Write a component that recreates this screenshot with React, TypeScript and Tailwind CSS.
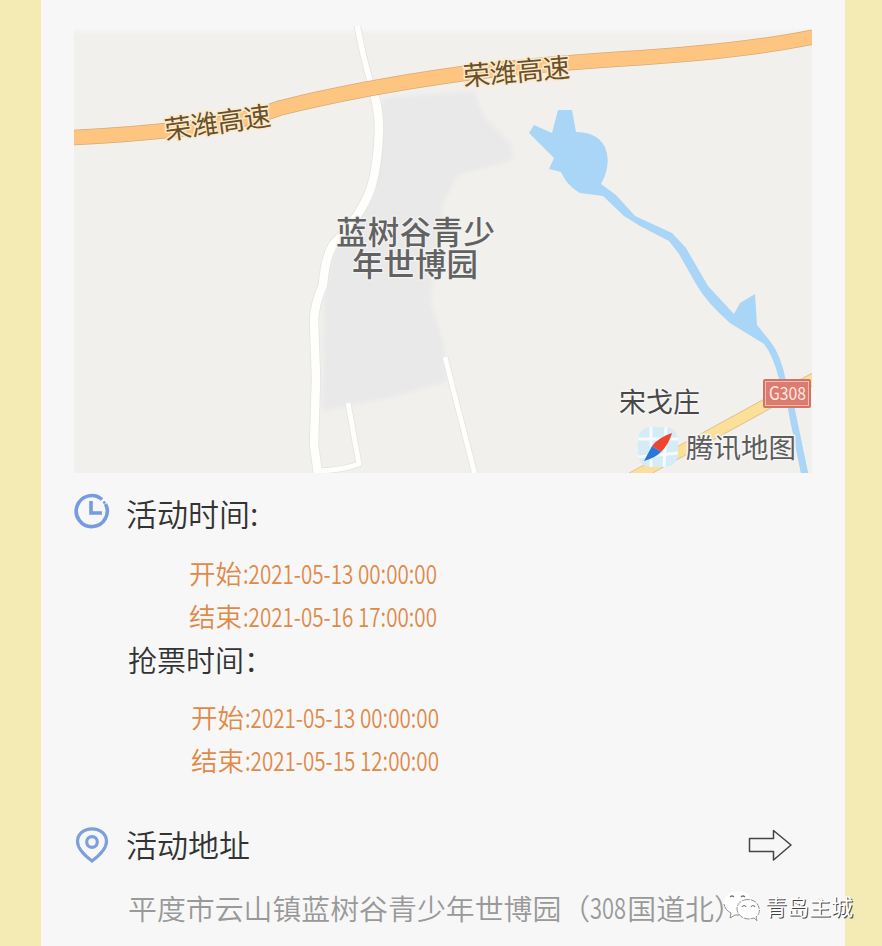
const FONT = "font-['Noto_Sans_CJK_SC',sans-serif]";

function VenueMap() {
  return (
    <svg className="block h-[447px] w-[738px]" viewBox="74 26 738 447">
      <defs>
        <filter id="soft" x="-10%" y="-10%" width="120%" height="120%">
          <feGaussianBlur stdDeviation="2" />
        </filter>
        <linearGradient id="fade" x1="0" y1="0" x2="0" y2="1">
          <stop offset="0" stopColor="#f8f8fa" />
          <stop offset="1" stopColor="#f8f8fa" stopOpacity="0" />
        </linearGradient>
        <clipPath id="logo">
          <rect x="638" y="427" width="40" height="40" rx="13" />
        </clipPath>
      </defs>
      <rect x="74" y="26" width="738" height="447" fill="#f1f0ed" />
      <rect x="74" y="26" width="738" height="9" fill="url(#fade)" />

      {/* Venue grounds */}
      <path
        d="M382 98L474 91L484 117L512 145L513 160L458 175L444 200L437 250L430 300L444 345L446 382L385 399L322 411L324 300L332 255L372 195Z"
        fill="#e9e9e9"
        filter="url(#soft)"
      />

      {/* Minor roads */}
      <g fill="none" strokeLinejoin="round">
        <g stroke="#e2e2df">
          <path d="M357 24Q362 54 371 84" strokeWidth="7" />
          <path d="M371 84Q379 106 379 130Q378 165 371 188Q361 216 333 245Q325 258 323 285Q314 305 314 322L316 378L314 445L318 473" strokeWidth="10" />
          <path d="M348 403L359 464Q343 470 318 471" strokeWidth="6.5" />
          <path d="M445 357L475 475" strokeWidth="6.5" />
        </g>
        <g stroke="#fefefc">
          <path d="M357 24Q362 54 371 84" strokeWidth="5.5" />
          <path d="M371 84Q379 106 379 130Q378 165 371 188Q361 216 333 245Q325 258 323 285Q314 305 314 322L316 378L314 445L318 473" strokeWidth="8.5" />
          <path d="M348 403L359 464Q343 470 318 471" strokeWidth="5" />
          <path d="M445 357L475 475" strokeWidth="5" />
        </g>
      </g>

      {/* Lake and river */}
      <path
        d="M529 133L534 125L552 133L558 110L572 110L576 132Q597 132 605 147Q612 164 601 184L616 195L635 216L672 233L686 248L708 286L734 314L740 303L755 294L757 325L770 341Q781 355 786 381L794 408L808 473L801 473L788 407L779 379Q773 355 764 344L730 323Q706 302 696 284L679 254L669 241L640 226L624 216L603 196L580 193Q567 186 561 172L549 169L554 158Z"
        fill="#a9d5f6"
      />

      {/* G308 */}
      <path d="M630 479L765 405L815 378" fill="none" stroke="#d9bd91" strokeWidth="12" />
      <path d="M630 479L765 405L815 378" fill="none" stroke="#fbe09a" strokeWidth="10.500" />
      <path d="M787 400L793 400L808 473L801 473L789 415Z" fill="#a9d5f6" />
      <rect x="763" y="379" width="48" height="29" rx="2" fill="#d17367" />
      <rect x="765.5" y="381.5" width="43" height="24" fill="#dc7c70" stroke="#f3bbb1" strokeWidth="1" />
      <text x="769" y="400" fontSize="18" textLength="37" lengthAdjust="spacingAndGlyphs" fill="#ffe8e2" className={FONT}>
        G308
      </text>

      {/* Expressway */}
      <path d="M72 137.500Q130 135 190 128Q240 123 280 108Q360 88 460 74Q530 65 620 59Q740 52 813 37" fill="none" stroke="#d9a972" strokeWidth="15.500" />
      <path d="M72 137.500Q130 135 190 128Q240 123 280 108Q360 88 460 74Q530 65 620 59Q740 52 813 37" fill="none" stroke="#fec580" strokeWidth="14" />

      <g className={FONT} strokeLinejoin="round" paintOrder="stroke">
        <g fontSize="27" fill="#69502a" stroke="#fbeacb" strokeWidth="3">
          <text transform="translate(166 140) rotate(-8)" textLength="107">荣潍高速</text>
          <text transform="translate(464 86) rotate(-5)" textLength="107">荣潍高速</text>
        </g>
        <g fontSize="31.500" fontWeight="500" fill="#626262" stroke="#f3f3f1" strokeWidth="2.500">
          <text x="336" y="244" textLength="159">蓝树谷青少</text>
          <text x="352" y="276">年世博园</text>
        </g>
        <text x="619" y="412" fontSize="27" fill="#484848" stroke="#f5f5f3" strokeWidth="3">宋戈庄</text>
        <text x="686" y="458" fontSize="27.500" fill="#5c5c5c" stroke="#f5f5f3" strokeWidth="3">腾讯地图</text>
      </g>

      {/* Map provider badge */}
      <g clipPath="url(#logo)">
        <rect x="638" y="427" width="40" height="40" fill="#d5ebf5" />
        <path d="M651 427V467M638 439H678M666 427L664 467M638 457L678 453" stroke="#f5fbfc" strokeWidth="3" />
      </g>
      <path d="M672 433Q659 437 652 446L661 452Q669 444 672 433Z" fill="#ee4531" />
      <path d="M652 446L644 461Q655 458 661 452Z" fill="#2878d8" />
    </svg>
  );
}

function TimeRow({ label, value }: { label: string; value: string }) {
  return (
    <div className="flex h-[43px] items-center whitespace-nowrap text-[26.500px] leading-[39px] font-[350] text-[#df8a48]">
      <span className="-mt-1">{label}</span>
      <svg className="h-[43px] w-[196px] overflow-visible" viewBox="0 0 196 43">
        <text x="1" y="31" textLength="194" lengthAdjust="spacingAndGlyphs" fill="currentColor">
          :{value}
        </text>
      </svg>
    </div>
  );
}

function ClockIcon() {
  return (
    <svg className="h-9 w-9" viewBox="0 0 36 36" fill="none" stroke="#749cde" strokeWidth="3.600">
      <path d="M28 6.500A15.500 15.500 0 1 0 31.500 11" />
      <path d="M29.500 8.500L31 10.500" strokeWidth="2.500" />
      <path d="M17 8V20H28" />
    </svg>
  );
}

function PinIcon() {
  return (
    <svg className="h-9 w-9" viewBox="0 0 36 36" fill="none" stroke="#7ea0da" strokeWidth="3.200">
      <path d="M18 34C14 31 3.500 23 3.500 14.500C3.500 7 10 1.800 18 1.800S32.500 7 32.500 14.500C32.500 23 22 31 18 34Z" />
      <circle cx="18" cy="15" r="5.300" />
    </svg>
  );
}

function Watermark() {
  return (
    <div className="absolute left-[722px] top-[889px] flex items-center">
      <svg className="h-9 w-10" viewBox="0 0 40 36" fill="#fff">
        <path d="M2 15C2 7 8 2 16 2S30 7 30 15L25 24L13 25L8 29L9 24Q2 21 2 15Z" />
        <path d="M2 15Q3 21 9 24L8 29L13 26L17 26" fill="none" stroke="#777" strokeWidth="0.800" />
        <path d="M26 10.500C19 10.500 15 15 15 20S20 30 27 30L32 29L35 32L34 28C37 25 38 23 37 19C36 14 32 10.500 26 10.500Z" stroke="#777" strokeWidth="0.800" strokeDasharray="6 1" />
        <path d="M8 8Q10 6 12 8M19 8Q21 6 23 8M20 18Q22 15 24 18M29 18Q31 15 33 18" fill="none" stroke="#777" strokeWidth="1.200" />
      </svg>
      <span className="-mt-1 ml-[3px] whitespace-nowrap text-[22px] leading-9 text-white [text-shadow:1px_1px_0_#444]">青岛主城</span>
    </div>
  );
}

export default function App() {
  return (
    <div className="relative h-[946px] w-[882px] overflow-hidden bg-[#f4ebb4] pl-[41px] font-['Noto_Sans_CJK_SC',sans-serif]">
      <main className="h-full w-[804px] bg-[#f7f7f8] pl-[33px] pt-[26px]">
        <VenueMap />

        <section className="pt-[17px]">
          <div className="flex h-[50px] items-center">
            <div className="-mt-2">
              <ClockIcon />
            </div>
            <h2 className="-mt-1 ml-4 text-[31px] font-[350] text-[#333]">活动时间:</h2>
          </div>
          <div className="ml-[115px] pt-[13px]">
            <TimeRow label="开始" value="2021-05-13 00:00:00" />
            <TimeRow label="结束" value="2021-05-16 17:00:00" />
          </div>
          <h2 className="ml-[54px] h-[43px] text-[29px] leading-[41px] font-[350] text-[#333]">抢票时间：</h2>
          <div className="ml-[117px] pt-[15px]">
            <TimeRow label="开始" value="2021-05-13 00:00:00" />
            <TimeRow label="结束" value="2021-05-15 12:00:00" />
          </div>
        </section>

        <section className="pt-[37px]">
          <div className="flex h-[50px] items-center">
            <PinIcon />
            <h2 className="-mt-0.5 ml-4 text-[31px] font-[350] text-[#333]">活动地址</h2>
            <svg className="ml-auto mr-[53px] h-8 w-11" viewBox="0 0 44 32" fill="none" stroke="#444" strokeWidth="1.500">
              <path d="M1.500 9.500H25.500V1.500L43 16L25.500 31V22.500H1.500Z" strokeLinejoin="round" />
            </svg>
          </div>
          <p className="ml-[54px] flex h-[50px] items-center whitespace-nowrap pt-[26px] text-[28.900px] font-[350] text-[#999]">
            平度市云山镇蓝树谷青少年世博园（
            <svg className="h-[42px] w-[37px] shrink-0 overflow-visible" viewBox="0 0 37 42">
              <text x="0" y="31.500" textLength="36" lengthAdjust="spacingAndGlyphs" fill="currentColor">308</text>
            </svg>
            国道北）
          </p>
        </section>
      </main>
      <Watermark />
    </div>
  );
}
